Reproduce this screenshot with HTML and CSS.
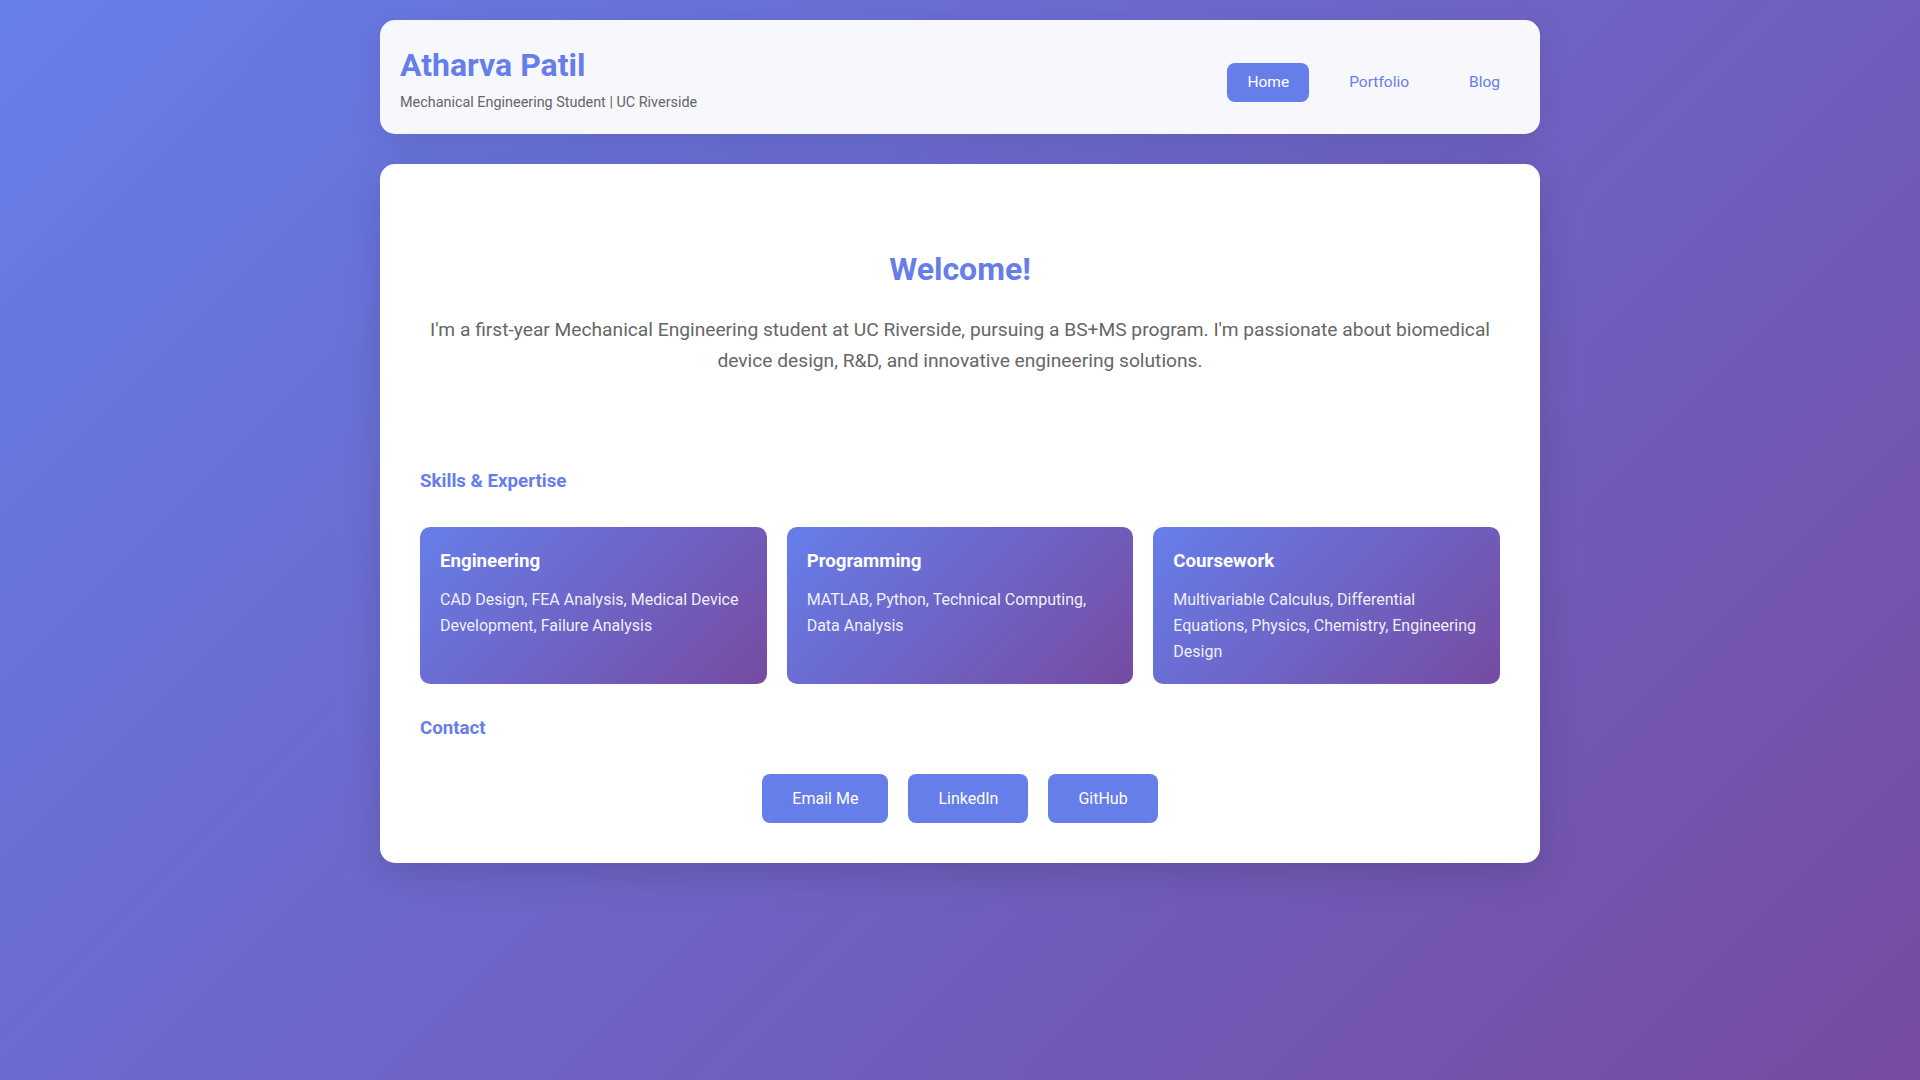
FILE: index.html
```html
<!DOCTYPE html>
<html lang="en">
<head>
<meta charset="utf-8">
<title>Atharva Patil</title>
<link rel="stylesheet" href="styles.css">
</head>
<body>
<div class="container">
  <header class="site-header">
    <div class="brand">
      <h1 class="brand-name">Atharva Patil</h1>
      <p class="brand-sub">Mechanical Engineering Student | UC Riverside</p>
    </div>
    <nav class="nav">
      <a class="nav-link active" href="#">Home</a>
      <a class="nav-link" href="#">Portfolio</a>
      <a class="nav-link" href="#">Blog</a>
    </nav>
  </header>

  <main class="main-card">
    <section class="hero">
      <h2 class="hero-title">Welcome!</h2>
      <p class="hero-text">I'm a first-year Mechanical Engineering student at UC Riverside, pursuing a BS+MS program. I'm passionate about biomedical device design, R&amp;D, and innovative engineering solutions.</p>
    </section>

    <section class="section skills">
      <h3 class="section-title skills-title">Skills &amp; Expertise</h3>
      <div class="skill-grid">
        <div class="skill-card">
          <h4 class="skill-title">Engineering</h4>
          <p class="skill-text">CAD Design, FEA Analysis, Medical Device Development, Failure Analysis</p>
        </div>
        <div class="skill-card">
          <h4 class="skill-title">Programming</h4>
          <p class="skill-text">MATLAB, Python, Technical Computing, Data Analysis</p>
        </div>
        <div class="skill-card">
          <h4 class="skill-title">Coursework</h4>
          <p class="skill-text">Multivariable Calculus, Differential Equations, Physics, Chemistry, Engineering Design</p>
        </div>
      </div>
    </section>

    <section class="section contact">
      <h3 class="section-title">Contact</h3>
      <div class="contact-links">
        <a class="btn" href="#">Email Me</a>
        <a class="btn" href="#">LinkedIn</a>
        <a class="btn" href="#">GitHub</a>
      </div>
    </section>
  </main>
</div>
</body>
</html>
```

FILE: styles.css
```css
* {
  box-sizing: border-box;
}

html, body {
  margin: 0;
  padding: 0;
}

body {
  min-height: 100vh;
  font-family: Roboto, "Liberation Sans", sans-serif;
  line-height: 1.6;
  color: #333;
  background: linear-gradient(135deg, #667eea 0%, #764ba2 100%);
}

.container {
  max-width: 1200px;
  margin: 0 auto;
  padding: 20px;
}

.site-header {
  display: flex;
  justify-content: space-between;
  align-items: center;
  padding: 20px;
  margin-bottom: 30px;
  background: rgba(255, 255, 255, 0.95);
  border-radius: 15px;
  box-shadow: 0 8px 32px rgba(0, 0, 0, 0.1);
}

.brand-name {
  margin: 0;
  font-size: 32px;
  font-weight: 700;
  color: #667eea;
}

.brand-sub {
  margin: 0;
  font-size: 14.4px;
  color: #666;
}

.nav {
  display: flex;
  gap: 20px;
  margin-top: 10px;
}

.nav-link {
  padding: 7px 20px;
  font-size: 15.5px;
  color: #667eea;
  text-decoration: none;
  border-radius: 8px;
}

.nav-link.active {
  background: #667eea;
  color: #fff;
}

.main-card {
  padding: 40px;
  background: #fff;
  border-radius: 15px;
  box-shadow: 0 10px 40px rgba(0, 0, 0, 0.15);
}

.hero {
  padding: 40px 0;
  text-align: center;
}

.hero-title {
  margin: 0 0 20px;
  font-size: 32px;
  font-weight: 700;
  color: #667eea;
}

.hero-text {
  margin: 0;
  font-size: 19.2px;
  color: #666;
}

.section-title {
  margin: 0 0 29.5px;
  font-size: 18.7px;
  font-weight: 700;
  color: #667eea;
}

.skills-title {
  margin-bottom: 30.7px;
}

.skills {
  margin-top: 50px;
}

.skill-grid {
  display: grid;
  grid-template-columns: repeat(3, 1fr);
  gap: 20px;
}

.skill-card {
  padding: 20px;
  border-radius: 10px;
  color: #fff;
  background: linear-gradient(135deg, #667eea 0%, #764ba2 100%);
}

.skill-title {
  margin: 0 0 10px;
  font-size: 18.7px;
  font-weight: 700;
}

.skill-text {
  margin: 0;
  font-size: 16px;
  color: rgba(255, 255, 255, 0.92);
}

.contact {
  margin-top: 30px;
}

.contact-links {
  display: flex;
  justify-content: center;
  gap: 20px;
}

.btn {
  padding: 12px 30px;
  font-size: 16px;
  color: #fff;
  background: #667eea;
  border-radius: 8px;
  text-decoration: none;
}
```
